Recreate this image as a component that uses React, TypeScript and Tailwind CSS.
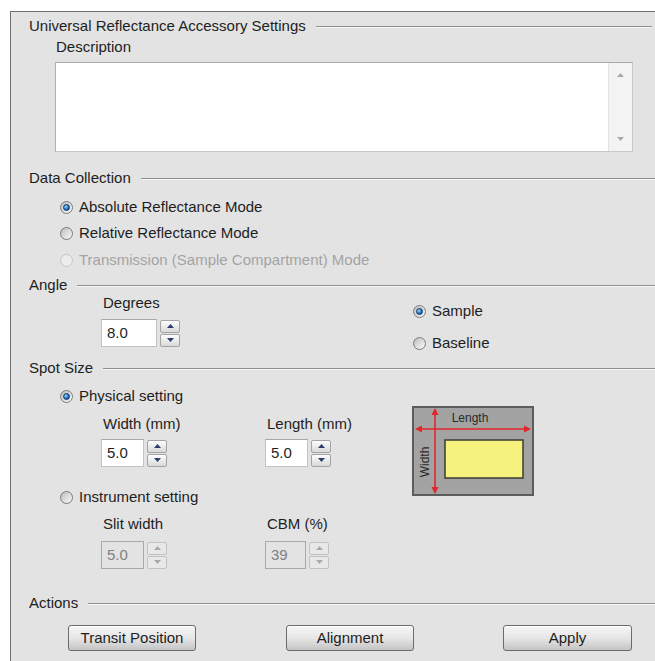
import * as React from "react"

function GroupHeader({ label, className = "" }: { label: string; className?: string }) {
  return (
    <div className={`flex h-4 items-center gap-[10px] pl-[18px] ${className}`}>
      <span className="text-[15px] leading-4 text-[#1e1e1e]">{label}</span>
      <div className="h-px flex-1 bg-[#8f8f8f] shadow-[0_1px_0_#f7f7f7]" />
    </div>
  )
}

function Radio({
  label,
  checked = false,
  disabled = false,
  className = "",
}: {
  label: string
  checked?: boolean
  disabled?: boolean
  className?: string
}) {
  return (
    <div className={`flex h-4 items-center gap-[6px] ${className}`}>
      <span
        className={`flex h-[13px] w-[13px] items-center justify-center rounded-full border ${
          disabled
            ? "border-[#c6c6c6] bg-[#ececec]"
            : "border-[#7b7b7b] bg-gradient-to-br from-[#bdbdbd] to-[#fbfbfb]"
        }`}
      >
        {checked && (
          <span className="h-[7px] w-[7px] rounded-full border border-[#0d3766] bg-[radial-gradient(circle_at_35%_35%,#9ad6ff,#1f74c2_55%,#0b3a70)]" />
        )}
      </span>
      <span className={`text-[15px] leading-4 ${disabled ? "text-[#a3a3a3]" : "text-[#1e1e1e]"}`}>
        {label}
      </span>
    </div>
  )
}

function Arrow({ up, disabled }: { up?: boolean; disabled?: boolean }) {
  return (
    <svg width="7" height="4" viewBox="0 0 7 4">
      <path
        d={up ? "M0 4 L3.5 0 L7 4 Z" : "M0 0 L3.5 4 L7 0 Z"}
        fill={disabled ? "#a9a9a9" : "#2d3c6c"}
      />
    </svg>
  )
}

function SpinButton({ up, disabled }: { up?: boolean; disabled?: boolean }) {
  return (
    <div
      className={`flex h-[13px] w-5 items-center justify-center rounded-[2px] border ${
        disabled
          ? "border-[#c2c2c2] bg-[#e8e8e8]"
          : "border-[#a4a4a4] bg-gradient-to-b from-[#fdfdfd] to-[#d9d9d9]"
      }`}
    >
      <Arrow up={up} disabled={disabled} />
    </div>
  )
}

function SpinBox({
  value,
  width,
  disabled = false,
}: {
  value: string
  width: string
  disabled?: boolean
}) {
  return (
    <div className="flex items-center gap-[3px]">
      <div
        className={`flex h-7 items-center border pl-[5px] text-[15px] ${width} ${
          disabled
            ? "border-[#a9a9a9] bg-[#e3e3e3] text-[#808080]"
            : "border-[#c3c3c3] border-t-[#a8a8a8] bg-white text-[#1e1e1e]"
        }`}
      >
        {value}
      </div>
      <div className="flex flex-col gap-px">
        <SpinButton up disabled={disabled} />
        <SpinButton disabled={disabled} />
      </div>
    </div>
  )
}

function Field({
  label,
  value,
  width,
  disabled,
}: {
  label: string
  value: string
  width: string
  disabled?: boolean
}) {
  return (
    <div className="flex w-[164px] shrink-0 flex-col">
      <span className="ml-[2px] h-4 text-[15px] leading-4 text-[#1e1e1e]">{label}</span>
      <div className={disabled ? "mt-[9px]" : "mt-[7px]"}>
        <SpinBox value={value} width={width} disabled={disabled} />
      </div>
    </div>
  )
}

function ActionButton({ label, className = "" }: { label: string; className?: string }) {
  return (
    <button
      className={`h-[26px] rounded-[3px] border border-[#6c6c6c] bg-gradient-to-b from-[#f6f6f6] via-[#e6e6e6] to-[#c4c4c4] text-[15px] text-[#1e1e1e] shadow-[inset_0_1px_0_#ffffff] ${className}`}
    >
      {label}
    </button>
  )
}

function SpotDiagram() {
  return (
    <svg width="122" height="90" viewBox="0 0 122 90" className="block">
      <rect x="1" y="1" width="120" height="88" fill="#a3a3a3" stroke="#5c5c5c" strokeWidth="2" />
      <rect x="33" y="34" width="78" height="38" fill="#f5f27e" stroke="#3b3b30" strokeWidth="1.5" />
      <g stroke="#e3262b" strokeWidth="1.6" fill="#e3262b">
        <line x1="23" y1="6" x2="23" y2="84" />
        <line x1="7" y1="23" x2="114" y2="23" />
        <path d="M23 2 L19.5 9 L26.5 9 Z" stroke="none" />
        <path d="M23 88 L19.5 81 L26.5 81 Z" stroke="none" />
        <path d="M3 23 L10 19.5 L10 26.5 Z" stroke="none" />
        <path d="M119 23 L112 19.5 L112 26.5 Z" stroke="none" />
      </g>
      <text x="58" y="16" textAnchor="middle" fontSize="12" fill="#2a2a2a" fontFamily="Liberation Sans, Arial, sans-serif">
        Length
      </text>
      <text
        x="0"
        y="0"
        transform="translate(17 56) rotate(-90)"
        textAnchor="middle"
        fontSize="12"
        fill="#2a2a2a"
        fontFamily="Liberation Sans, Arial, sans-serif"
      >
        Width
      </text>
    </svg>
  )
}

export default function App() {
  return (
    <div className="min-h-[661px] bg-white pl-[10px] pt-[11px] font-['Liberation_Sans',Arial,sans-serif]">
      <div className="flex h-[650px] flex-col border-l border-t border-[#707070] bg-[#e3e3e3]">
        <GroupHeader label="Universal Reflectance Accessory Settings" className="mt-[6px] pr-[3px]" />

        <span className="ml-[45px] mt-[5px] h-4 text-[15px] leading-4 text-[#1e1e1e]">Description</span>

        {/* description box with its scrollbar */}
        <div className="ml-[44px] mt-[7px] flex h-[90px] w-[578px] border border-[#c8c8c8] border-l-[#b0b0b0] border-t-[#a9a9a9] bg-white">
          <div className="flex-1" />
          <div className="flex w-6 flex-col items-center justify-between border-l border-[#e2e2e2] bg-[#f3f3f3] pb-[10px] pt-[10px]">
            <Arrow up disabled />
            <Arrow disabled />
          </div>
        </div>

        <GroupHeader label="Data Collection" className="mt-[18px]" />
        <div className="flex flex-col pl-[49px]">
          <Radio label="Absolute Reflectance Mode" checked className="mt-[13px]" />
          <Radio label="Relative Reflectance Mode" className="mt-[10px]" />
          <Radio label="Transmission (Sample Compartment) Mode" disabled className="mt-[11px]" />
        </div>

        <GroupHeader label="Angle" className="mt-[9px]" />
        <div className="flex">
          <div className="w-[402px] shrink-0 pl-[90px]">
            <div className="mt-[2px]">
              <span className="ml-[2px] block h-4 text-[15px] leading-4 text-[#1e1e1e]">Degrees</span>
              <div className="mt-[8px]">
                <SpinBox value="8.0" width="w-[56px]" />
              </div>
            </div>
          </div>
          <div className="flex flex-col">
            <Radio label="Sample" checked className="mt-[10px]" />
            <Radio label="Baseline" className="mt-[16px]" />
          </div>
        </div>

        <GroupHeader label="Spot Size" className="mt-[9px]" />
        <div className="flex">
          <div className="flex w-[401px] shrink-0 flex-col pl-[49px]">
            <Radio label="Physical setting" checked className="mt-[12px]" />
            <div className="mt-[12px] flex pl-[41px]">
              <Field label="Width (mm)" value="5.0" width="w-[43px]" />
              <Field label="Length (mm)" value="5.0" width="w-[43px]" />
            </div>
            <Radio label="Instrument setting" className="mt-[22px]" />
            <div className="mt-[11px] flex pl-[41px]">
              <Field label="Slit width" value="5.0" width="w-[43px]" disabled />
              <Field label="CBM (%)" value="39" width="w-[41px]" disabled />
            </div>
          </div>
          <div className="mt-[30px]">
            <SpotDiagram />
          </div>
        </div>

        <GroupHeader label="Actions" className="mt-[26px]" />
        <div className="mt-[14px] flex pl-[57px]">
          <ActionButton label="Transit Position" className="w-[128px]" />
          <ActionButton label="Alignment" className="ml-[90px] w-[128px]" />
          <ActionButton label="Apply" className="ml-[89px] w-[129px]" />
        </div>
      </div>
    </div>
  )
}
